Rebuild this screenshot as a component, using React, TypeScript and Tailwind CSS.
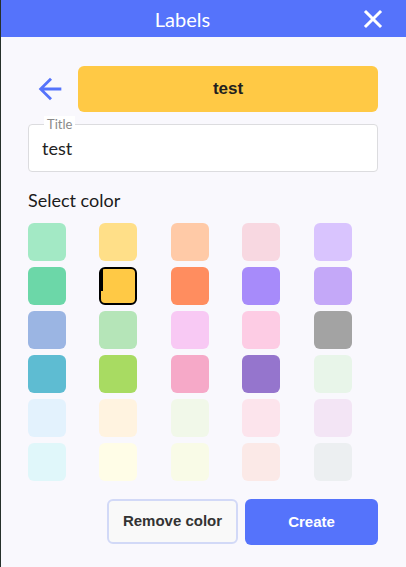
import { useState } from "react";

const swatches = [
  "#a3e9c5", "#ffdf88", "#ffcaa7", "#f8d8e1", "#d9c4fe",
  "#6cd7a8", "#ffc945", "#ff8d5f", "#a78bfa", "#c4a8f8",
  "#9bb5e3", "#b5e5b8", "#f8c9f4", "#fdcce4", "#a3a3a3",
  "#5ebcd2", "#a8db62", "#f6a9c8", "#9575cd", "#e8f5e9",
  "#e3f2fd", "#fff3e0", "#f1f8e9", "#fce4ec", "#f3e5f5",
  "#e0f7fa", "#fffde7", "#f9fbe7", "#fbe9e7", "#eceff1",
];

export default function App() {
  const [title, setTitle] = useState("test");
  const [selected, setSelected] = useState(6);

  return (
    <div className="min-h-[567px] bg-[#f9f8fd] border-l border-[#26302b] font-['Lato',sans-serif]">
      {/* Header */}
      <div className="h-[37px] bg-[#5573fb] flex items-center">
        <h1 className="flex-1 text-center text-white text-[20px] pl-[4px]">Labels</h1>
        <button className="w-[26px] h-[26px] mr-[20px] flex items-center justify-center text-white" aria-label="Close">
          <svg width="20" height="20" viewBox="0 0 20 20" fill="none" stroke="currentColor" strokeWidth="3" strokeLinecap="square">
            <path d="M3 3L17 17M17 3L3 17" />
          </svg>
        </button>
      </div>

      <div className="pl-[27px] pr-[28px]">
        {/* Preview row */}
        <div className="flex items-center mt-[29px]">
          <button className="ml-[5px] mr-[11px] text-[#5573fb]" aria-label="Back">
            <svg width="34" height="34" viewBox="0 0 24 24" fill="currentColor">
              <path d="M20 11H7.83l5.59-5.59L12 4l-8 8 8 8 1.41-1.41L7.83 13H20v-2z" />
            </svg>
          </button>
          <div
            className="flex-1 h-[46px] rounded-[6px] flex items-center justify-center font-['Liberation_Sans',sans-serif] font-bold text-[17px] text-[#1f1f1f]"
            style={{ backgroundColor: swatches[selected] }}
          >
            {title}
          </div>
        </div>

        {/* Title field */}
        <div className="relative mt-[12px] h-[48px] rounded-[4px] border border-[#dcdcdf] bg-white flex items-center">
          <span className="absolute -top-[9px] left-[15px] px-[3px] bg-white text-[13px] leading-[16px] text-[#8a8a8a]">
            Title
          </span>
          <input
            value={title}
            onChange={(e) => setTitle(e.target.value)}
            className="w-full bg-transparent pl-[13px] text-[18px] text-[#222] outline-none"
          />
        </div>

        <p className="mt-[16px] text-[18px] leading-[24px] text-[#1b1b1b]">Select color</p>

        {/* Swatches */}
        <div className="mt-[11px] grid grid-cols-5 w-[357px] gap-y-[6px]">
          {swatches.map((c, i) => (
            <button
              key={c}
              onClick={() => setSelected(i)}
              className={
                "relative w-[38px] h-[38px] rounded-[6px] " +
                (i === selected ? "border-2 border-black" : "")
              }
              style={{ backgroundColor: c }}
            >
              {i === selected && (
                <span className="absolute left-0 top-0 w-[2px] h-[22px] bg-black" />
              )}
            </button>
          ))}
        </div>

        {/* Actions */}
        <div className="mt-[18px] flex justify-end gap-[7px]">
          <button className="w-[131px] h-[45px] rounded-[6px] border-2 border-[#d2d9f7] bg-[#f9f9f9] font-['Liberation_Sans',sans-serif] font-bold text-[15px] text-[#333]">
            Remove color
          </button>
          <button className="w-[133px] h-[46px] rounded-[6px] bg-[#5573fb] font-['Liberation_Sans',sans-serif] font-bold text-[15px] text-white">
            Create
          </button>
        </div>
      </div>
    </div>
  );
}
